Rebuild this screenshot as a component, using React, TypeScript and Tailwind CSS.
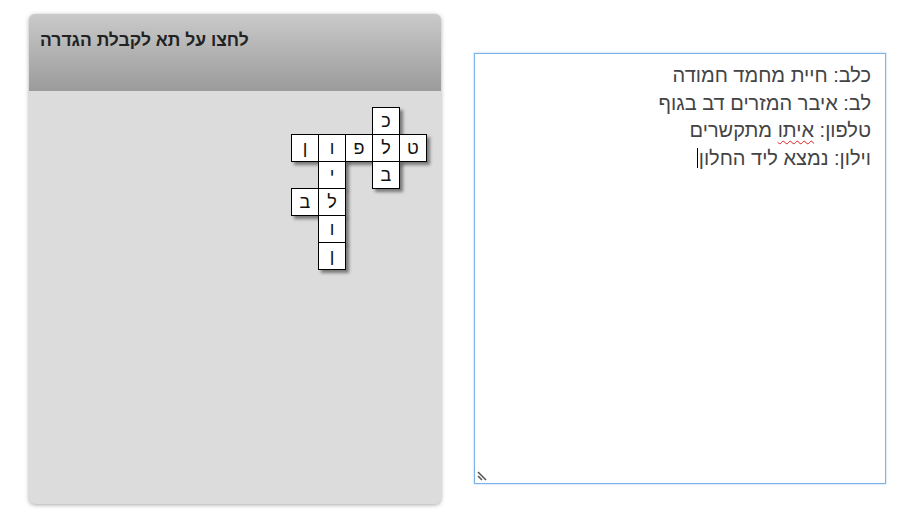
import React from 'react';

type Cell = { r: number; c: number; ch: string };

// crossword cells, 5 cols x 6 rows
const CELLS: Cell[] = [
  { r: 1, c: 4, ch: 'כ' },
  { r: 2, c: 1, ch: 'ן' },
  { r: 2, c: 2, ch: 'ו' },
  { r: 2, c: 3, ch: 'פ' },
  { r: 2, c: 4, ch: 'ל' },
  { r: 2, c: 5, ch: 'ט' },
  { r: 3, c: 2, ch: 'י' },
  { r: 3, c: 4, ch: 'ב' },
  { r: 4, c: 1, ch: 'ב' },
  { r: 4, c: 2, ch: 'ל' },
  { r: 5, c: 2, ch: 'ו' },
  { r: 6, c: 2, ch: 'ן' },
];

const LINES = ['כלב: חיית מחמד חמודה', 'לב: איבר המזרים דב בגוף'];

export default function App() {
  return (
    <div className="flex items-start w-[921px] h-[523px] bg-white font-['Liberation_Sans',Arial,sans-serif]">
      {/* Board panel */}
      <div className="ml-[29px] mt-[14px] w-[412px] h-[490px] rounded-[6px] bg-[#dcdcdc] shadow-[0_1px_4px_rgba(0,0,0,0.35)] overflow-hidden flex flex-col">
        <div className="h-[77px] bg-gradient-to-b from-[#cacaca] to-[#9b9b9b] px-[11px] pt-[15px]">
          <h2 dir="rtl" className="text-left text-[17.5px] font-bold text-[#222] leading-[22px] inline-block">
            לחצו על תא לקבלת הגדרה
          </h2>
        </div>
        <div className="flex-1 pl-[262px] pt-[16px]">
          <div className="grid grid-cols-[repeat(5,27px)] grid-rows-[repeat(6,27px)]">
            {CELLS.map((cell, i) => (
              <div
                key={i}
                style={{ gridRow: cell.r, gridColumn: cell.c }}
                className="bg-white border border-black -mr-px -mb-px flex items-center justify-center text-[18px] text-[#111] shadow-[3px_3px_3px_rgba(0,0,0,0.45)]"
              >
                {cell.ch}
              </div>
            ))}
          </div>
        </div>
      </div>

      {/* Definitions textarea */}
      <div className="relative ml-[33px] mt-[53px] w-[412px] h-[431px] border border-[#7ab3e8] bg-white shadow-[0_0_2px_rgba(90,160,230,0.5)]">
        <div dir="rtl" className="pr-[14px] pt-[8px] text-[20px] leading-[27.5px] text-[#444]">
          {LINES.map((l) => (
            <div key={l}>{l}</div>
          ))}
          <div>
            טלפון: <span className="underline decoration-wavy decoration-[#e02020] decoration-1 underline-offset-[3px]">איתו</span> מתקשרים
          </div>
          <div>
            וילון: נמצא ליד החלון
            <span className="inline-block w-px h-[20px] bg-black align-[-3px] mr-[1px]" />
          </div>
        </div>
        <svg className="absolute left-[2px] bottom-[2px]" width="12" height="12" viewBox="0 0 12 12">
          <path d="M1 3 L9 11 M1 7 L5 11" stroke="#555" strokeWidth="1.6" />
        </svg>
      </div>
    </div>
  );
}
